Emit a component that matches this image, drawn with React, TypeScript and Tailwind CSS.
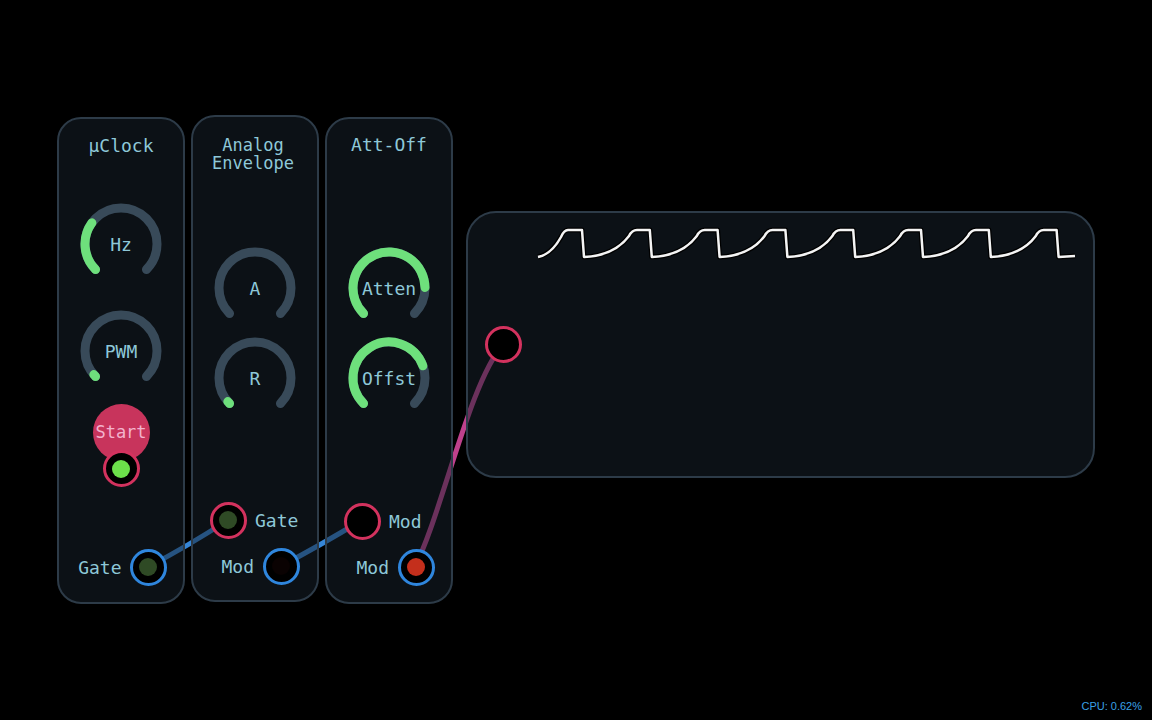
import React from "react";

// knob arc, angles in degrees, 135 = bottom-left, 405 = bottom-right
function arc(a0: number, a1: number, r = 36, c = 45) {
  const p = (a: number) => {
    const t = (a * Math.PI) / 180;
    return `${(c + r * Math.cos(t)).toFixed(2)} ${(c + r * Math.sin(t)).toFixed(2)}`;
  };
  const large = a1 - a0 > 180 ? 1 : 0;
  return `M ${p(a0)} A ${r} ${r} 0 ${large} 1 ${p(a1)}`;
}

function Knob({ label, value, className = "" }: { label: string; value: number; className?: string }) {
  return (
    <div className={`relative h-[90px] w-[90px] shrink-0 ${className}`}>
      <svg width="90" height="90" viewBox="0 0 90 90" className="absolute inset-0">
        <path d={arc(135, 405)} stroke="#384a59" strokeWidth="9" fill="none" strokeLinecap="round" />
        {value > 0 && (
          <path d={arc(135, 135 + 270 * value)} stroke="#6ee07c" strokeWidth="9" fill="none" strokeLinecap="round" />
        )}
      </svg>
      <span className="absolute inset-0 flex items-center justify-center text-[18px] text-[#8ec8d8]">{label}</span>
    </div>
  );
}

function Jack({ ring, dot }: { ring: string; dot: string }) {
  return (
    <div className={`flex h-[37px] w-[37px] shrink-0 items-center justify-center rounded-full border-[3px] bg-black ${ring}`}>
      <div className={`h-[18px] w-[18px] rounded-full ${dot}`} />
    </div>
  );
}

const moduleCls =
  "relative z-10 flex h-[487px] w-[128px] shrink-0 flex-col items-center rounded-[24px] border-2 border-[#2d3b48] bg-[#18222c]/50";

// scope trace: drops every 67.8px starting at x=583
function tracePath() {
  const top = 230;
  const bot = 257;
  let d = `M538 ${bot} C548 255 556 246 561 237 Q564 ${top} 568 ${top} L582 ${top} L584 ${bot}`;
  for (let k = 1; k < 8; k++) {
    const drop = 583 + 67.8 * k;
    const s = drop - 67.8 + 1;
    d += ` C${(s + 22).toFixed(1)} 256 ${(s + 36).toFixed(1)} 248 ${(s + 45).toFixed(1)} 236`;
    d += ` Q${(s + 48).toFixed(1)} ${top} ${(s + 53).toFixed(1)} ${top}`;
    d += ` L${(drop - 1).toFixed(1)} ${top} L${(drop + 1).toFixed(1)} ${bot}`;
  }
  d += ` L1075 256`;
  return d;
}

export default function App() {
  return (
    <div className="relative h-[720px] w-[1152px] overflow-hidden bg-black font-['DejaVu_Sans_Mono',monospace]">
      {/* patch cables, drawn under the modules */}
      <svg className="pointer-events-none absolute inset-0 z-0" width="1152" height="720" viewBox="0 0 1152 720">
        <path d="M148 567 Q188 546 228 520" stroke="#3585d6" strokeWidth="5" fill="none" strokeLinecap="round" />
        <path d="M281 566 Q321 545 362 520" stroke="#3585d6" strokeWidth="5" fill="none" strokeLinecap="round" />
        <path d="M415 566 C440 520 470 380 503 345" stroke="#be418c" strokeWidth="5" fill="none" strokeLinecap="round" />
      </svg>

      <div className="flex items-start pl-[57px]">
        {/* µClock */}
        <div className={`${moduleCls} mt-[117px] pt-[18px] pb-[16.5px]`}>
          <div className="text-[18px] leading-[18px] text-[#8ec8d8]">µClock</div>
          <Knob label="Hz" value={0.3} className="mt-[44px]" />
          <Knob label="PWM" value={0.015} className="mt-[17px]" />
          <div className="mt-[8px] flex h-[57px] w-[57px] items-center justify-center rounded-full bg-[#c8345c] text-[17px] text-[#f3b3cd]">
            Start
          </div>
          <div className="relative z-10 -mt-[11px]">
            <Jack ring="border-[#d3325e]" dot="bg-[#6ce04a]" />
          </div>
          <div className="mt-auto flex w-full items-center justify-end gap-[8px] pr-[16.5px]">
            <span className="text-[18px] text-[#8ec8d8]">Gate</span>
            <Jack ring="border-[#2f86dd]" dot="bg-[#2f4a25]" />
          </div>
        </div>

        {/* Analog Envelope */}
        <div className={`${moduleCls} ml-[6px] mt-[115px] pt-[19px] pb-[15.5px]`}>
          <div className="pr-[4px] text-center text-[17px] leading-[18px] text-[#8ec8d8]">
            <div>Analog</div>
            <div>Envelope</div>
          </div>
          <Knob label="A" value={0} className="mt-[71px]" />
          <Knob label="R" value={0.015} />
          <div className="mt-auto flex w-full flex-col gap-[9px]">
            <div className="flex items-center gap-[8.5px] pl-[16.5px]">
              <Jack ring="border-[#d3325e]" dot="bg-[#2f4a25]" />
              <span className="text-[18px] text-[#8ec8d8]">Gate</span>
            </div>
            <div className="flex items-center justify-end gap-[8.5px] pr-[17.5px]">
              <span className="text-[18px] text-[#8ec8d8]">Mod</span>
              <Jack ring="border-[#2f86dd]" dot="bg-[#0a0202]" />
            </div>
          </div>
        </div>

        {/* Att-Off */}
        <div className={`${moduleCls} ml-[6px] mt-[117px] pt-[17px] pb-[16.5px]`}>
          <div className="text-[18px] leading-[18px] text-[#8ec8d8]">Att-Off</div>
          <Knob label="Atten" value={0.83} className="mt-[89px]" />
          <Knob label="Offst" value={0.76} />
          <div className="mt-auto flex w-full flex-col gap-[9px]">
            <div className="flex items-center gap-[8.5px] pl-[16.5px]">
              <Jack ring="border-[#d3325e]" dot="bg-black" />
              <span className="text-[18px] text-[#8ec8d8]">Mod</span>
            </div>
            <div className="flex items-center justify-end gap-[8.5px] pr-[16.5px]">
              <span className="text-[18px] text-[#8ec8d8]">Mod</span>
              <Jack ring="border-[#2f86dd]" dot="bg-[#c42f1c]" />
            </div>
          </div>
        </div>

        {/* Scope */}
        <div className="relative z-10 ml-[13px] mt-[211px] flex h-[267px] w-[629px] shrink-0 items-center rounded-[30px] border-2 border-[#2d3b48] bg-[#18222c]/50 pl-[16.5px]">
          <svg className="absolute inset-0" width="625" height="263" viewBox="468 213 625 263">
            <path d={tracePath()} stroke="#000" strokeWidth="5" fill="none" strokeLinejoin="round" />
            <path d={tracePath()} stroke="#f4f4f4" strokeWidth="2.5" fill="none" strokeLinejoin="round" />
          </svg>
          <div className="relative">
            <Jack ring="border-[#d3325e]" dot="bg-black" />
          </div>
        </div>
      </div>

      <div className="absolute bottom-[7px] right-[10px] font-['Liberation_Sans',Arial,sans-serif] text-[11px] leading-[13px] text-[#3aa0e6]">
        CPU: 0.62%
      </div>
    </div>
  );
}
